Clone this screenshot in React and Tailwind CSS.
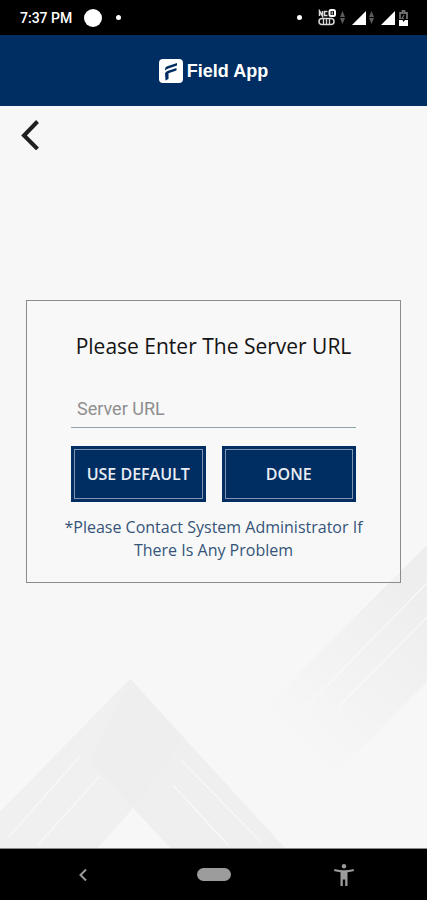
import { useState } from "react";

function AppLogo() {
  return (
    <svg viewBox="0 0 24 24" className="h-6 w-6" aria-hidden="true">
      <rect x="0" y="0" width="24" height="24" rx="4" fill="#ffffff" />
      <path d="M6 11C6 8.500 7 7.800 9 7.100L18 4V6.500L9.500 9.400Q7.500 10 6 11.500Z" fill="#002d62" />
      <path d="M6 14.500Q6.300 12.600 9 11.700L17.500 8.900V11.500L9.500 14.200V20L6.500 21.500Z" fill="#002d62" />
    </svg>
  );
}

function DataArrows() {
  return (
    <svg viewBox="0 0 5 13" className="h-[13px] w-[5px]" fill="#5c5c5c" aria-hidden="true">
      <path d="M2.500 0L5 6H0Z" />
      <path d="M2.500 13L0 7H5Z" />
    </svg>
  );
}

function Signal() {
  return (
    <svg viewBox="0 0 14 14" className="h-3.5 w-3.5" fill="#ffffff" aria-hidden="true">
      <path d="M14 0V14H0Z" />
    </svg>
  );
}

function StatusBar() {
  return (
    <div className="flex h-[35px] items-center justify-between bg-black pr-[19px] pl-5 text-white">
      <div className="flex items-center">
        <span className="font-[Roboto,sans-serif] text-sm font-medium">7:37 PM</span>
        <span className="ml-3 h-[18px] w-[18px] rounded-full bg-white" />
        <span className="ml-3.5 h-[5px] w-[5px] rounded-full bg-white" />
      </div>
      <div className="flex items-center">
        <span className="mr-4 h-[5px] w-[5px] rounded-full bg-white" />
        <svg viewBox="0 0 18 17" className="mr-1 h-[17px] w-[18px]" fill="none" stroke="#d8d8d8" aria-hidden="true">
          <path d="M1.500 7V2L4.500 7V2M9.500 2.500H6.500V6.500H9.500" strokeWidth="1.500" />
          <rect x="11.500" y="1" width="5.500" height="6" rx="1.500" stroke="#ffffff" strokeWidth="2" />
          <path d="M14.200 2.500V5.500" strokeWidth="1.200" />
          <rect x="1" y="9.500" width="15" height="6" rx="3" strokeWidth="1.500" />
          <path d="M5.500 10V15M8.500 10V15M11.500 10V15" strokeWidth="1.300" />
        </svg>
        <DataArrows />
        <span className="ml-[7px]">
          <Signal />
        </span>
        <span className="ml-[3px]">
          <DataArrows />
        </span>
        <span className="ml-[7px]">
          <Signal />
        </span>
        <svg viewBox="0 0 9 16" className="ml-1 h-4 w-[9px]" aria-hidden="true">
          <path d="M1 9V3H3.500V1H5.500V3H8V9" fill="none" stroke="#707070" strokeWidth="1.800" />
          <path d="M5 5L3 8.500H5" fill="none" stroke="#707070" strokeWidth="1.200" />
          <path d="M0 10H3.500L4.500 12L6 10H9V16H0Z" fill="#ffffff" />
        </svg>
      </div>
    </div>
  );
}

function Backdrop() {
  return (
    <svg
      viewBox="0 0 427 743"
      preserveAspectRatio="xMidYMax slice"
      className="absolute inset-0 h-full w-full"
      aria-hidden="true"
    >
      <defs>
        <linearGradient id="band" gradientUnits="userSpaceOnUse" x1="427" y1="500" x2="290" y2="637">
          <stop offset="0" stopColor="#eeeeee" />
          <stop offset="1" stopColor="#f7f7f7" />
        </linearGradient>
      </defs>
      <path d="M427 440V577L335 669L260 607Z" fill="url(#band)" />
      <path d="M130 574L0 707V743H98L190 640Z" fill="#f0f0f0" />
      <path d="M130 574L285 743H170L90 657Z" fill="#efefef" />
      <path d="M130 574L90 657L133 703L184 633Z" fill="#eeeeee" />
      <path d="M133 703L98 743H170Z" fill="#f7f7f7" />
      <g stroke="#f8f8f8" strokeWidth="1.500">
        <path d="M427 478L306 602M427 512L338 602" />
        <path d="M80 651L8 733M99 672L38 740" />
        <path d="M182 656L262 738M173 680L228 740" />
      </g>
    </svg>
  );
}

function ActionButton({ children, ...props }) {
  return (
    <button
      className="flex-1 bg-[#002d62] p-[3px] text-base font-semibold text-[#e9edf3]"
      {...props}
    >
      <span className="flex h-[50px] items-center justify-center border border-[#8195b0]">
        {children}
      </span>
    </button>
  );
}

function ServerForm() {
  const [serverUrl, setServerUrl] = useState("");

  return (
    <form
      onSubmit={(event) => event.preventDefault()}
      className="mx-auto mt-[148px] w-full max-w-md border border-[#8c8c8c] bg-white/20 px-8 pt-[29px] pb-5"
    >
      <h1 className="text-center text-[21px] leading-8 text-[#141414]">
        <label htmlFor="serverUrl">Please Enter The Server URL</label>
      </h1>
      <div className="mt-7 px-3">
        <input
          id="serverUrl"
          name="serverUrl"
          type="text"
          placeholder="Server URL"
          value={serverUrl}
          onChange={(event) => setServerUrl(event.target.value)}
          className="h-[38px] w-full border-b border-[#8fa3ad] px-1.5 font-[Roboto,sans-serif] text-lg text-[#141414] outline-none placeholder:text-[#8f8f8f]"
        />
        <div className="mt-[18px] flex gap-4">
          <ActionButton type="button" onClick={() => setServerUrl("")}>
            USE DEFAULT
          </ActionButton>
          <ActionButton type="submit">DONE</ActionButton>
        </div>
      </div>
      <p className="mt-3.5 text-center text-base leading-[23px] text-[#355478]">
        *Please Contact System Administrator If There Is Any Problem
      </p>
    </form>
  );
}

function NavBar() {
  return (
    <nav className="grid h-[51px] grid-cols-[1fr_96px_1fr] items-center justify-items-center bg-black text-[#9c9c9c]">
      <button aria-label="Back" className="p-1">
        <svg viewBox="0 0 8 12" className="h-3 w-2" fill="none" stroke="currentColor" strokeWidth="2">
          <path d="M7 0.500L1.500 6L7 11.500" />
        </svg>
      </button>
      <button aria-label="Home" className="h-[13px] w-[34px] rounded-full bg-[#9c9c9c]" />
      <button aria-label="Accessibility" className="p-1">
        <svg viewBox="0 0 20 22" className="h-[22px] w-5" fill="currentColor">
          <circle cx="10" cy="2.200" r="2.200" />
          <path d="M0.500 5Q10 7.500 19.500 5L20 7Q16.500 8 13.500 8.300V22H11.200V15.500H8.800V22H6.500V8.300Q3.500 8 0 7Z" />
        </svg>
      </button>
    </nav>
  );
}

function App() {
  return (
    <div className="flex min-h-screen flex-col bg-[#f7f7f7] font-['Open_Sans',sans-serif]">
      <StatusBar />
      <header className="flex h-[71px] items-center justify-center gap-1 bg-[#002d62] text-white">
        <AppLogo />
        <span className="font-['Liberation_Sans',sans-serif] text-lg font-bold">Field App</span>
      </header>
      <main className="relative flex-1 border-b border-[#8a8a8a]">
        <Backdrop />
        <div className="relative px-[26px] pb-8">
          <button aria-label="Go back" className="-ml-2 mt-2.5 block p-0.5">
            <svg viewBox="0 0 20 32" className="h-8 w-5" fill="none" stroke="#202020" strokeWidth="4">
              <path d="M17.500 3.500L4 17.500L17.500 31" />
            </svg>
          </button>
          <ServerForm />
        </div>
      </main>
      <NavBar />
    </div>
  );
}

export default App;
